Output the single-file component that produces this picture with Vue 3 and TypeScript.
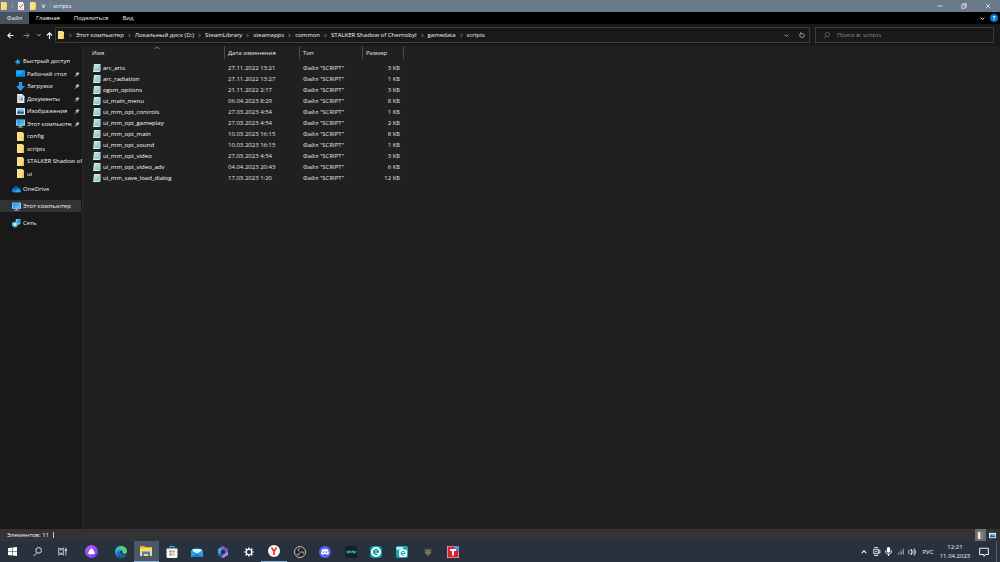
<script setup lang="ts">
interface Item {
  label: string
  icon: string
  pinned?: boolean
}
interface FileRow {
  name: string
  date: string
  size: string
}

const tabs: string[] = ['Файл', 'Главная', 'Поделиться', 'Вид']
const crumbs: string[] = [
  'Этот компьютер',
  'Локальный диск (D:)',
  'SteamLibrary',
  'steamapps',
  'common',
  'STALKER Shadow of Chernobyl',
  'gamedata',
  'scripts',
]
const quick: Item[] = [
  { label: 'Рабочий стол', icon: 'desktop', pinned: true },
  { label: 'Загрузки', icon: 'download', pinned: true },
  { label: 'Документы', icon: 'document', pinned: true },
  { label: 'Изображения', icon: 'picture', pinned: true },
  { label: 'Этот компьютер', icon: 'pc', pinned: true },
  { label: 'config', icon: 'folder' },
  { label: 'scripts', icon: 'folder' },
  { label: 'STALKER Shadow of Chernobyl', icon: 'folder' },
  { label: 'ui', icon: 'folder' },
]
const roots: Item[] = [
  { label: 'OneDrive', icon: 'cloud' },
  { label: 'Этот компьютер', icon: 'pc' },
  { label: 'Сеть', icon: 'network' },
]
const files: FileRow[] = [
  { name: 'arc_arts', date: '27.11.2022 13:21', size: '3 КБ' },
  { name: 'arc_radiation', date: '27.11.2022 13:27', size: '1 КБ' },
  { name: 'ogsm_options', date: '21.11.2022 2:17', size: '3 КБ' },
  { name: 'ui_main_menu', date: '06.04.2023 8:29', size: '8 КБ' },
  { name: 'ui_mm_opt_controls', date: '27.03.2023 4:54', size: '1 КБ' },
  { name: 'ui_mm_opt_gameplay', date: '27.03.2023 4:54', size: '2 КБ' },
  { name: 'ui_mm_opt_main', date: '10.03.2023 16:15', size: '8 КБ' },
  { name: 'ui_mm_opt_sound', date: '10.03.2023 16:15', size: '1 КБ' },
  { name: 'ui_mm_opt_video', date: '27.03.2023 4:54', size: '3 КБ' },
  { name: 'ui_mm_opt_video_adv', date: '04.04.2023 20:43', size: '6 КБ' },
  { name: 'ui_mm_save_load_dialog', date: '17.03.2023 1:20', size: '12 КБ' },
]
const apps: { icon: string; label: string; state?: string }[] = [
  { icon: 'edge', label: 'Edge' },
  { icon: 'explorer', label: 'Проводник', state: 'active' },
  { icon: 'store', label: 'Store' },
  { icon: 'mail', label: 'Почта' },
  { icon: 'm365', label: 'Microsoft 365' },
  { icon: 'gear', label: 'Параметры' },
  { icon: 'yandex', label: 'Яндекс', state: 'open' },
  { icon: 'obs', label: 'OBS' },
  { icon: 'discord', label: 'Discord' },
  { icon: 'wave', label: 'Wave' },
  { icon: 'eset', label: 'E' },
  { icon: 'cards', label: 'Cards' },
  { icon: 'tanks', label: 'Tanks' },
  { icon: 'redt', label: 'T' },
]
</script>

<template>
  <div class="window">
    <svg class="sprite" aria-hidden="true">
      <defs>
        <linearGradient id="gEdge" x1="0" y1="0" x2="1" y2="1">
          <stop offset="0" stop-color="#2bc3d2" />
          <stop offset="1" stop-color="#0b5cb4" />
        </linearGradient>
        <linearGradient id="gEdge2" x1="0" y1="0" x2="1" y2="0">
          <stop offset="0" stop-color="#28b5e8" />
          <stop offset="1" stop-color="#62d957" />
        </linearGradient>
        <linearGradient id="gAlice" x1="0" y1="0" x2="1" y2="1">
          <stop offset="0" stop-color="#c35cf5" />
          <stop offset="1" stop-color="#7238f0" />
        </linearGradient>
        <linearGradient id="gScreen" x1="0" y1="0" x2="1" y2="1">
          <stop offset="0" stop-color="#1b8fe6" />
          <stop offset="1" stop-color="#6cc8fa" />
        </linearGradient>
        <linearGradient id="gNote" x1="0" y1="0" x2="1" y2="1">
          <stop offset="0" stop-color="#d4f2f5" />
          <stop offset="1" stop-color="#6db8c8" />
        </linearGradient>
      </defs>
      <symbol id="folder" viewBox="0 0 16 16">
        <path d="M2 0h9l3 2v14H2z" fill="#fbdc7c" />
        <path d="M12 9h2v7h-3z" fill="#e9bc50" />
        <path d="M2 0h2v16H2z" fill="#ffe9a3" />
      </symbol>
      <symbol id="props" viewBox="0 0 16 16">
        <path d="M2 0h9l3 3v13H2z" fill="#f4f4f4" />
        <path d="M4 8l3 3 5-7" fill="none" stroke="#df5948" stroke-width="2" />
        <path d="M4 13h8M4 3h4" stroke="#b7b7b7" />
      </symbol>
      <symbol id="star" viewBox="0 0 16 16">
        <path d="M9 1l1 5 6-1-4 4 3 4-5-1-4 4v-5l-5-2 5-3z" fill="#35a5f0" />
      </symbol>
      <symbol id="desktop" viewBox="0 0 16 16">
        <path d="M0 2h16v12H0z" fill="#078ee8" />
        <path d="M1 3h14L1 12z" fill="#28a9f7" />
        <path d="M0 13h16v1H0z" fill="#055fa8" />
      </symbol>
      <symbol id="download" viewBox="0 0 16 16">
        <path d="M5 0h6v7h5l-8 9-8-9h5z" fill="#3297e8" />
      </symbol>
      <symbol id="document" viewBox="0 0 16 16">
        <path d="M2 0h9l4 4v12H2z" fill="#e8edf0" />
        <path d="M11 0v4h4z" fill="#aab5bd" />
        <path d="M4 4h4M4 7h3M4 10h3M4 13h3" stroke="#7d98aa" />
        <path d="M8 6h4v6H8z" fill="#4f9fd2" />
      </symbol>
      <symbol id="picture" viewBox="0 0 16 16">
        <path d="M0 2h16v12H0z" fill="#f2f5f7" />
        <path d="M2 4h12v8H2z" fill="#69b9ef" />
        <path d="M2 9l4-2 3 2 5-1v4H2z" fill="#245f91" />
      </symbol>
      <symbol id="pc" viewBox="0 0 16 16">
        <path d="M0 1h16v11H0z" fill="#b5d9ed" />
        <path d="M1 2h14v9H1z" fill="url(#gScreen)" />
        <path d="M6 12h4v2h3v1H3v-1h3z" fill="#9cc4dc" />
      </symbol>
      <symbol id="cloud" viewBox="0 0 16 16">
        <path d="M3 13a3 3 0 0 1-1-6 5 5 0 0 1 9-2 4 4 0 0 1 4 4 2 2 0 0 1-1 4z" fill="#1481d8" />
        <path d="M2 7a5 5 0 0 1 9-2L7 8z" fill="#0a5bb0" />
        <path d="M3 13l8-5 4 3a2 2 0 0 1-1 2z" fill="#31abf0" />
      </symbol>
      <symbol id="network" viewBox="0 0 16 16">
        <path d="M7 0h8v8l-4 3-5-4z" fill="#7bc7ef" />
        <path d="M9 1h5v6H9z" fill="#2e8fd3" />
        <path d="M0 6l6-1 4 4-1 5-5 1-4-4z" fill="#58b9dc" />
        <path d="M3 8l4-1 1 4-4 2z" fill="#c8edf8" />
      </symbol>
      <symbol id="note" viewBox="0 0 16 16">
        <path d="M2 0h13v14l-2 2H0l1-4z" fill="#f3ecd1" />
        <path d="M2 1h12l-1 13H1z" fill="url(#gNote)" />
        <path d="M4 4h8M4 7h8M3 10h8" stroke="#a6dae3" />
      </symbol>
      <symbol id="pin" viewBox="0 0 16 16">
        <path d="M9 1l6 6-2 1-3 3v3l-3-3-5 5-1-1 5-5-3-3 3-1 3-3z" fill="#a9bbc6" />
      </symbol>
      <symbol id="back" viewBox="0 0 16 16">
        <path d="M15 8H2M8 2L2 8l6 6" fill="none" stroke="currentColor" stroke-width="2.6" />
      </symbol>
      <symbol id="forward" viewBox="0 0 16 16">
        <path d="M1 8h13M8 2l6 6-6 6" fill="none" stroke="currentColor" stroke-width="2" />
      </symbol>
      <symbol id="up" viewBox="0 0 16 16">
        <path d="M8 16V2M2 8l6-6 6 6" fill="none" stroke="currentColor" stroke-width="2.6" />
      </symbol>
      <symbol id="down" viewBox="0 0 16 16">
        <path d="M2 5l6 6 6-6" fill="none" stroke="currentColor" stroke-width="3" />
      </symbol>
      <symbol id="chev" viewBox="0 0 16 16">
        <path d="M5 3l5 5-5 5" fill="none" stroke="currentColor" stroke-width="2.5" />
      </symbol>
      <symbol id="caret" viewBox="0 0 16 16">
        <path d="M1 3h14" stroke="currentColor" stroke-width="2" />
        <path d="M2 7h12l-6 6z" fill="currentColor" />
      </symbol>
      <symbol id="refresh" viewBox="0 0 16 16">
        <path d="M11 4a6 6 0 1 1-6 0M5 0v5h5" fill="none" stroke="currentColor" stroke-width="2" />
      </symbol>
      <symbol id="lens" viewBox="0 0 16 16">
        <circle cx="10" cy="6" r="5" fill="none" stroke="currentColor" stroke-width="1.6" />
        <path d="M7 10l-6 6" stroke="currentColor" stroke-width="1.6" />
      </symbol>
      <symbol id="minimize" viewBox="0 0 16 16">
        <path d="M2 8h13" stroke="currentColor" stroke-width="2" />
      </symbol>
      <symbol id="restore" viewBox="0 0 16 16">
        <path d="M2 5h9v9H2zM5 5V2h9v9h-3" fill="none" stroke="currentColor" stroke-width="2" />
      </symbol>
      <symbol id="close" viewBox="0 0 16 16">
        <path d="M2 2l12 12M14 2L2 14" stroke="currentColor" stroke-width="2" />
      </symbol>
      <symbol id="windows" viewBox="0 0 16 16">
        <path d="M0 2l7-1v6H0zM8 1l8-1v7H8zM0 8h7v7l-7-1zM8 8h8v8l-8-1z" fill="#fff" />
      </symbol>
      <symbol id="taskview" viewBox="0 0 16 16">
        <path d="M1 5h9v6H1zM1 1v2h9V1M1 15v-2h9v2M14 1v14" fill="none" stroke="#d5d9de" stroke-width="1.5" />
        <path d="M12 4h4v3h-4z" fill="#d5d9de" />
      </symbol>
      <symbol id="alice" viewBox="0 0 24 24">
        <circle cx="12" cy="12" r="12" fill="url(#gAlice)" />
        <path d="M12 6c2 0 6 7 6 9 0 3-12 3-12 0 0-2 4-9 6-9z" fill="#fff" />
      </symbol>
      <symbol id="edge" viewBox="0 0 24 24">
        <circle cx="12" cy="12" r="12" fill="url(#gEdge)" />
        <path d="M0 11C1 4 6 0 12 0c7 0 12 5 12 10 0 4-3 6-6 6-3 0-4-1-3-3 2-6-9-9-15-2z" fill="url(#gEdge2)" />
        <path d="M9 11c-3 7 5 11 12 8-3 5-9 6-13 4-5-4-4-11 1-12z" fill="#125aa8" />
        <path d="M11 10c-2 3 0 7 4 8 3 1 6 0 8-1l1-3c-3 3-7 2-9 1-1-1 1-3 0-4-1-2-3-2-4-1z" fill="#263646" />
      </symbol>
      <symbol id="explorer" viewBox="0 0 24 24">
        <path d="M0 2h9l2 2h13v18H0z" fill="#f0aa2c" />
        <path d="M0 6h24v16H0z" fill="#ffd866" />
        <path d="M4 13h16v9h-4v-4H8v4H4z" fill="#3a86c6" />
      </symbol>
      <symbol id="store" viewBox="0 0 24 24">
        <path d="M8 6V1h8v5" fill="none" stroke="#4bb5e7" stroke-width="2" />
        <path d="M1 5h22v16a3 3 0 0 1-3 3H4a3 3 0 0 1-3-3z" fill="#f4f6f8" />
        <path d="M7 9h4v4H7z" fill="#ef5231" />
        <path d="M13 9h4v4h-4z" fill="#7fb92b" />
        <path d="M7 15h4v4H7z" fill="#1ba1df" />
        <path d="M13 15h4v4h-4z" fill="#fab91d" />
      </symbol>
      <symbol id="mail" viewBox="0 0 24 24">
        <path d="M0 9l12-7 12 7v13H0z" fill="#0b64b5" />
        <path d="M3 6h18v9H3z" fill="#e4f2fb" />
        <path d="M0 8l12 7 12-7v14H0z" fill="#26a5ea" />
        <path d="M0 22l12-7 12 7z" fill="#0e83d3" />
      </symbol>
      <symbol id="m365" viewBox="0 0 24 24">
        <path d="M12 0L2 6v12l6 4 5-4-5-3V9l8-4z" fill="#4b9ee7" />
        <path d="M12 0l10 6v8l-6 1V9l-8-4z" fill="#7b56c9" />
        <path d="M22 12v6l-10 6-6-3 10-6z" fill="#b48ae5" />
        <path d="M2 15l6 0 5 4-5 4-6-5z" fill="#2162b5" />
      </symbol>
      <symbol id="gear" viewBox="0 0 24 24">
        <circle cx="12" cy="12" r="6" fill="none" stroke="#f4f4f4" stroke-width="4" />
        <path d="M12 1v5M12 18v5M1 12h5M18 12h5M4 4l4 4M16 16l4 4M20 4l-4 4M8 16l-4 4" stroke="#f4f4f4" stroke-width="4" />
        <circle cx="12" cy="12" r="5" fill="#29323f" />
      </symbol>
      <symbol id="yandex" viewBox="0 0 24 24">
        <circle cx="12" cy="12" r="12" fill="#f7f7f7" />
        <path d="M7 5l5 8 5-8M12 12v8" fill="none" stroke="#ed3530" stroke-width="3.4" />
      </symbol>
      <symbol id="obs" viewBox="0 0 24 24">
        <circle cx="12" cy="12" r="11" fill="#2c2c31" stroke="#b8babd" stroke-width="2" />
        <circle cx="11" cy="8" r="3.6" fill="#9a9ca0" />
        <circle cx="8" cy="15" r="3.6" fill="#9a9ca0" />
        <circle cx="16" cy="14" r="3.6" fill="#9a9ca0" />
        <circle cx="13" cy="8" r="3" fill="#1c1c20" />
        <circle cx="7" cy="13" r="3" fill="#1c1c20" />
        <circle cx="15" cy="16" r="3" fill="#1c1c20" />
      </symbol>
      <symbol id="discord" viewBox="0 0 24 24">
        <circle cx="12" cy="12" r="12" fill="#5865f2" />
        <path d="M6 7l4-1h4l4 1 2 8-4 3-2-2h-4l-2 2-4-3z" fill="#fff" />
        <circle cx="9" cy="12" r="1.7" fill="#5865f2" />
        <circle cx="15" cy="12" r="1.7" fill="#5865f2" />
      </symbol>
      <symbol id="wave" viewBox="0 0 24 24">
        <path d="M0 0h24v24H0z" fill="#191f24" />
        <path d="M3 10l3 4 3-4 2 2h3l2-2 3 4 3-4" fill="none" stroke="#16b9a1" stroke-width="2.6" />
      </symbol>
      <symbol id="eset" viewBox="0 0 24 24">
        <rect width="24" height="24" rx="7" fill="#0b9fa5" />
        <circle cx="12" cy="12" r="10" fill="#fff" />
        <path d="M7 12h10a5 5 0 1 0-2 4" fill="none" stroke="#078e97" stroke-width="2.6" />
      </symbol>
      <symbol id="cards" viewBox="0 0 24 24">
        <rect x="0" y="0" width="24" height="24" rx="4" fill="#16aab4" />
        <path d="M1 2h13v5H1z" fill="#f3ffff" />
        <path d="M3 4h9" stroke="#0eaab3" />
        <rect x="6" y="7" width="16" height="15" rx="4" fill="#fff" />
        <path d="M10 15h8a4 4 0 1 0-2 3" fill="none" stroke="#0eaab3" stroke-width="2" />
      </symbol>
      <symbol id="tanks" viewBox="0 0 24 24">
        <path d="M2 3l5 2 5-3 5 3 5-2-1 13-9 7-9-7z" fill="#45423d" />
        <path d="M5 7l4 2v8M19 7l-4 2v8M12 5v16M6 13l3 3M18 13l-3 3" fill="none" stroke="#b5ad9b" stroke-width="1.6" />
      </symbol>
      <symbol id="redt" viewBox="0 0 24 24">
        <path d="M0 0h24v24H0z" fill="#e7e7ea" />
        <path d="M1 1h22v22H1z" fill="#d92130" />
        <path d="M11 0h13v13z" fill="#5c8de4" />
        <path d="M6 8h12M12 8v11" stroke="#fff" stroke-width="4" />
      </symbol>
      <symbol id="meet" viewBox="0 0 16 16">
        <path d="M4 1h7M4 15h7M3 4h8v8H3zM11 7l3-2v6l-3-2" fill="none" stroke="currentColor" stroke-width="1.6" />
        <circle cx="7" cy="8" r="1.5" fill="currentColor" />
      </symbol>
      <symbol id="mic" viewBox="0 0 16 16">
        <rect x="5" y="0" width="6" height="10" rx="3" fill="#fff" />
        <path d="M3 6v3c0 5 10 5 10 0V6M8 12v4" fill="none" stroke="#fff" stroke-width="1.6" />
      </symbol>
      <symbol id="signal" viewBox="0 0 16 16">
        <path d="M3 15v-3M7 15V9M11 15V6M15 15V2" stroke="#aeb3bb" stroke-width="2" />
        <path d="M1 13L14 1" stroke="#717985" />
      </symbol>
      <symbol id="sound" viewBox="0 0 16 16">
        <path d="M0 6h3l4-4v12l-4-4H0zM9 5q2 3 0 6M11 3q4 5 0 10M13 1q5 7 0 14" fill="none" stroke="currentColor" stroke-width="1.4" />
      </symbol>
      <symbol id="bubble" viewBox="0 0 16 16">
        <path d="M1 2h14v10h-5l-2 3v-3H1z" fill="none" stroke="currentColor" stroke-width="1.6" />
      </symbol>
    </svg>

    <header class="title">
      <svg class="i8"><use href="#folder" /></svg>
      <span class="bar"></span>
      <button class="plain" aria-label="Свойства"><svg class="i8"><use href="#props" /></svg></button>
      <button class="plain" aria-label="Новая папка"><svg class="i8"><use href="#folder" /></svg></button>
      <button class="plain" aria-label="Настройка панели"><svg class="i5"><use href="#caret" /></svg></button>
      <h1>scripts</h1>
      <div class="controls">
        <button aria-label="Свернуть"><svg class="i6"><use href="#minimize" /></svg></button>
        <button aria-label="Восстановить"><svg class="i6"><use href="#restore" /></svg></button>
        <button aria-label="Закрыть"><svg class="i6"><use href="#close" /></svg></button>
      </div>
    </header>

    <nav class="ribbon">
      <button v-for="(t, i) in tabs" :key="t" :class="{ file: i === 0 }">{{ t }}</button>
      <button class="expand" aria-label="Развернуть ленту"><svg class="i5"><use href="#down" /></svg></button>
      <button class="help" aria-label="Справка"><span>?</span></button>
    </nav>

    <div class="address">
      <div class="arrows">
        <button aria-label="Назад"><svg class="i7"><use href="#back" /></svg></button>
        <button class="dim" aria-label="Вперед"><svg class="i7"><use href="#forward" /></svg></button>
        <button class="small" aria-label="Последние расположения"><svg class="i4"><use href="#down" /></svg></button>
        <button class="small" aria-label="Вверх"><svg class="i7"><use href="#up" /></svg></button>
      </div>
      <div class="path">
        <svg class="i8"><use href="#folder" /></svg>
        <template v-for="c in crumbs" :key="c">
          <svg class="sep"><use href="#chev" /></svg>
          <button class="crumb">{{ c }}</button>
        </template>
        <button class="history" aria-label="Предыдущие расположения"><svg class="i5"><use href="#down" /></svg></button>
        <button class="reload" aria-label="Обновить"><svg class="i6"><use href="#refresh" /></svg></button>
      </div>
      <label class="search">
        <svg class="i7"><use href="#lens" /></svg>
        <input type="search" placeholder="Поиск в: scripts" aria-label="Поиск в: scripts" />
      </label>
    </div>

    <main class="body">
      <aside class="side">
        <ul class="quick">
          <li class="root">
            <a href="#"><svg class="i7"><use href="#star" /></svg><span>Быстрый доступ</span></a>
          </li>
          <li v-for="(q, i) in quick" :key="i">
            <a href="#">
              <svg class="i9"><use :href="'#' + q.icon" /></svg>
              <span>{{ q.label }}</span>
              <svg v-if="q.pinned" class="pin"><use href="#pin" /></svg>
            </a>
          </li>
        </ul>
        <ul class="roots">
          <li v-for="(r, i) in roots" :key="r.label" :class="{ selected: i === 1 }">
            <a href="#"><svg class="i9"><use :href="'#' + r.icon" /></svg><span>{{ r.label }}</span></a>
          </li>
        </ul>
      </aside>

      <section class="list">
        <table>
          <colgroup>
            <col class="c-name" />
            <col class="c-date" />
            <col class="c-type" />
            <col class="c-size" />
          </colgroup>
          <thead>
            <tr>
              <th><span class="head">Имя<svg class="sort" viewBox="0 0 8 4"><path d="M1 4l3-3 3 3" /></svg></span></th>
              <th><span class="head">Дата изменения</span></th>
              <th><span class="head">Тип</span></th>
              <th><span class="head">Размер</span></th>
            </tr>
          </thead>
          <tbody>
            <tr v-for="f in files" :key="f.name">
              <td><span class="name"><svg class="i8"><use href="#note" /></svg>{{ f.name }}</span></td>
              <td>{{ f.date }}</td>
              <td>Файл "SCRIPT"</td>
              <td>{{ f.size }}</td>
            </tr>
          </tbody>
        </table>
      </section>
    </main>

    <footer class="status">
      <span>Элементов: 11</span><span class="mark"></span>
      <div class="views">
        <button class="on" aria-label="Таблица"><svg viewBox="0 0 12 12"><path d="M3 2h3v8H3z" fill="#e8e8e8" /><path d="M8 2v8" stroke="#9b9b9b" /></svg></button>
        <button aria-label="Крупные значки"><svg class="i7"><use href="#picture" /></svg></button>
      </div>
    </footer>

    <nav class="taskbar">
      <div class="system">
        <button aria-label="Пуск"><svg class="i9"><use href="#windows" /></svg></button>
        <button aria-label="Поиск"><svg class="i9"><use href="#lens" /></svg></button>
        <button aria-label="Представление задач"><svg class="i9"><use href="#taskview" /></svg></button>
      </div>
      <button class="alice" aria-label="Алиса"><svg class="i13"><use href="#alice" /></svg></button>
      <div class="apps">
        <button v-for="a in apps" :key="a.icon" :class="a.state" :aria-label="a.label">
          <svg :class="a.icon === 'gear' || a.icon === 'tanks' ? 'i10' : 'i12'"><use :href="'#' + a.icon" /></svg>
        </button>
      </div>
      <div class="tray">
        <button aria-label="Скрытые значки"><svg class="i6 flip"><use href="#down" /></svg></button>
        <button aria-label="Собрание"><svg class="i9"><use href="#meet" /></svg></button>
        <button aria-label="Микрофон"><svg class="i9"><use href="#mic" /></svg></button>
        <button aria-label="Сеть"><svg class="i7"><use href="#signal" /></svg></button>
        <button aria-label="Громкость"><svg class="i8"><use href="#sound" /></svg></button>
        <button class="lang">РУС</button>
        <button class="clock"><span>12:21</span><span>11.04.2023</span></button>
        <button class="notify" aria-label="Уведомления"><svg class="i10"><use href="#bubble" /></svg></button>
        <button class="peek" aria-label="Показать рабочий стол"></button>
      </div>
    </nav>
  </div>
</template>

<style>
body {
  margin: 0;
  background: #202020;
}
</style>

<style scoped>
.window {
  display: flex;
  flex-direction: column;
  height: 100vh;
  overflow: hidden;
  background: #202020;
  color: #f4f4f4;
  font: 6px/8px "Open Sans", "Noto Sans", sans-serif;
}
.window * {
  box-sizing: border-box;
}
.sprite {
  position: absolute;
  width: 0;
  height: 0;
}
svg {
  display: block;
  flex: none;
}
button {
  display: flex;
  align-items: center;
  justify-content: center;
  padding: 0;
  border: 0;
  background: none;
  color: inherit;
  font: inherit;
  white-space: nowrap;
}
a {
  color: inherit;
  text-decoration: none;
}
ul {
  margin: 0;
  padding: 0;
  list-style: none;
}
.i4 { width: 4px; height: 4px; }
.i5 { width: 5px; height: 5px; }
.i6 { width: 6px; height: 6px; }
.i7 { width: 7px; height: 7px; }
.i8 { width: 8px; height: 8px; }
.i9 { width: 9px; height: 9px; }
.i10 { width: 10px; height: 10px; }
.i12 { width: 12px; height: 12px; }
.i13 { width: 13px; height: 13px; }

.title {
  display: flex;
  flex: none;
  align-items: center;
  gap: 4px;
  height: 12px;
  background: #69788b;
}
.title .bar {
  width: 1px;
  height: 6px;
  background: #8390a0;
}
.title h1 {
  margin: 0;
  padding-left: 2px;
  border-left: 1px solid #8390a0;
  color: #fff;
  font-size: 6px;
  font-weight: 400;
  line-height: 7px;
}
.controls {
  display: flex;
  margin-left: auto;
  color: #f0f2f4;
}
.controls button {
  width: 24px;
  height: 12px;
}

.ribbon {
  display: flex;
  flex: none;
  height: 12px;
  background: #000;
}
.ribbon button {
  padding: 0 7px;
}
.ribbon .file {
  width: 29px;
  background: #46535f;
}
.ribbon .expand {
  margin-left: auto;
  padding: 0 3px;
}
.ribbon .help {
  padding: 0 2px;
}
.help span {
  width: 8px;
  height: 8px;
  border-radius: 50%;
  background: #0078d7;
  color: #fff;
  font-weight: 700;
}

.address {
  display: flex;
  flex: none;
  align-items: center;
  height: 22px;
  padding-right: 6px;
  background: #191919;
}
.arrows {
  display: flex;
  flex: none;
  width: 55px;
  padding-left: 2px;
}
.arrows button {
  width: 16px;
}
.arrows .small {
  width: 10px;
}
.arrows .dim {
  color: #8c8c8c;
}
.path {
  display: flex;
  flex: 1 1 755px;
  align-items: center;
  min-width: 0;
  height: 16px;
  padding-left: 1px;
  border: 1px solid #3c3c3c;
}
.sep {
  width: 5px;
  height: 5px;
  margin: 0 3px;
  color: #a8a8a8;
}
.history {
  width: 16px;
  margin-left: auto;
  color: #b5b5b5;
}
.reload {
  width: 15px;
  height: 14px;
  color: #c0c0c0;
}
.search {
  display: flex;
  flex: 0 1 179px;
  align-items: center;
  gap: 7px;
  height: 16px;
  margin-left: 5px;
  padding-left: 7px;
  border: 1px solid #3c3c3c;
  color: #777;
}
.search input {
  flex: 1;
  min-width: 0;
  padding: 0;
  border: 0;
  outline: 0;
  background: none;
  color: #ddd;
  font: inherit;
}
.search input::placeholder {
  color: #8d8d8d;
}

.body {
  display: flex;
  flex: 1;
  min-height: 0;
}
.side {
  flex: none;
  width: 83px;
  padding-top: 9px;
  border-right: 1px solid #2b2b2b;
  background: #191919;
}
.quick {
  display: grid;
  grid-template-columns: minmax(0, 1fr);
  grid-auto-rows: 1fr;
  height: 125px;
  margin-bottom: 3px;
}
.side a {
  display: flex;
  align-items: center;
  height: 12px;
  overflow: hidden;
}
.quick a {
  gap: 2px;
  padding-left: 16px;
}
.quick .root a {
  padding-left: 14px;
}
.side span {
  flex: 0 1 auto;
  min-width: 0;
  overflow: hidden;
  white-space: nowrap;
}
.pin {
  width: 6px;
  height: 6px;
  margin-right: 2px;
  margin-left: auto;
}
.roots {
  display: grid;
  gap: 5px;
}
.roots a {
  gap: 2px;
  padding-left: 12px;
}
.roots .selected {
  margin-right: 1px;
  background: #333;
}

.list {
  flex: 1;
  min-width: 0;
  padding-left: 9px;
}
table {
  width: 312px;
  border-collapse: collapse;
  table-layout: fixed;
}
.c-name { width: 133px; }
.c-date { width: 75px; }
.c-type { width: 63px; }
.c-size { width: 41px; }
th {
  height: 16px;
  padding: 0;
  font-weight: 400;
  text-align: left;
  vertical-align: top;
}
.head {
  position: relative;
  display: block;
  height: 13px;
  padding-left: 3px;
  border-right: 1px solid #4a4a4a;
  color: #e4e4e4;
  line-height: 15px;
}
th:first-child .head {
  padding-left: 0;
}
.sort {
  position: absolute;
  top: 0;
  left: 62px;
  width: 6px;
  height: 3px;
  fill: none;
  stroke: #999;
}
td {
  height: 11px;
  padding: 0 0 0 3px;
  color: #e2e2e2;
  white-space: nowrap;
}
td:first-child {
  padding-left: 1px;
  color: #fafafa;
}
td:last-child {
  padding-right: 4px;
  text-align: right;
}
.name {
  display: flex;
  align-items: center;
  gap: 2px;
}

.status {
  display: flex;
  flex: none;
  align-items: center;
  gap: 4px;
  height: 12px;
  padding-left: 7px;
  background: #333;
}
.mark {
  width: 1px;
  height: 6px;
  background: #ccc;
}
.views {
  display: flex;
  gap: 1px;
  margin-left: auto;
  padding-right: 2px;
}
.views button {
  width: 11px;
  height: 12px;
}
.views .on {
  background: #6c6c6c;
}

.taskbar {
  display: flex;
  flex: none;
  height: 21px;
  background: #28313e;
}
.system {
  display: flex;
}
.system button {
  width: 25px;
  height: 21px;
}
.alice {
  width: 33px;
}
.apps {
  display: grid;
  grid-template-columns: repeat(14, 1fr);
  width: 358px;
}
.apps .active {
  background: #4a5766;
  border-bottom: 1px solid #86b0dc;
}
.apps .open {
  border-bottom: 1px solid #86b0dc;
}
.tray {
  display: flex;
  margin-left: auto;
}
.tray button {
  width: 12px;
}
.flip {
  transform: rotate(180deg);
}
.tray .lang {
  width: 20px;
}
.tray .clock {
  flex-direction: column;
  width: 34px;
}
.clock span {
  line-height: 9px;
}
.tray .notify {
  width: 24px;
}
.tray .peek {
  width: 4px;
  border-left: 1px solid #56606c;
}
</style>
